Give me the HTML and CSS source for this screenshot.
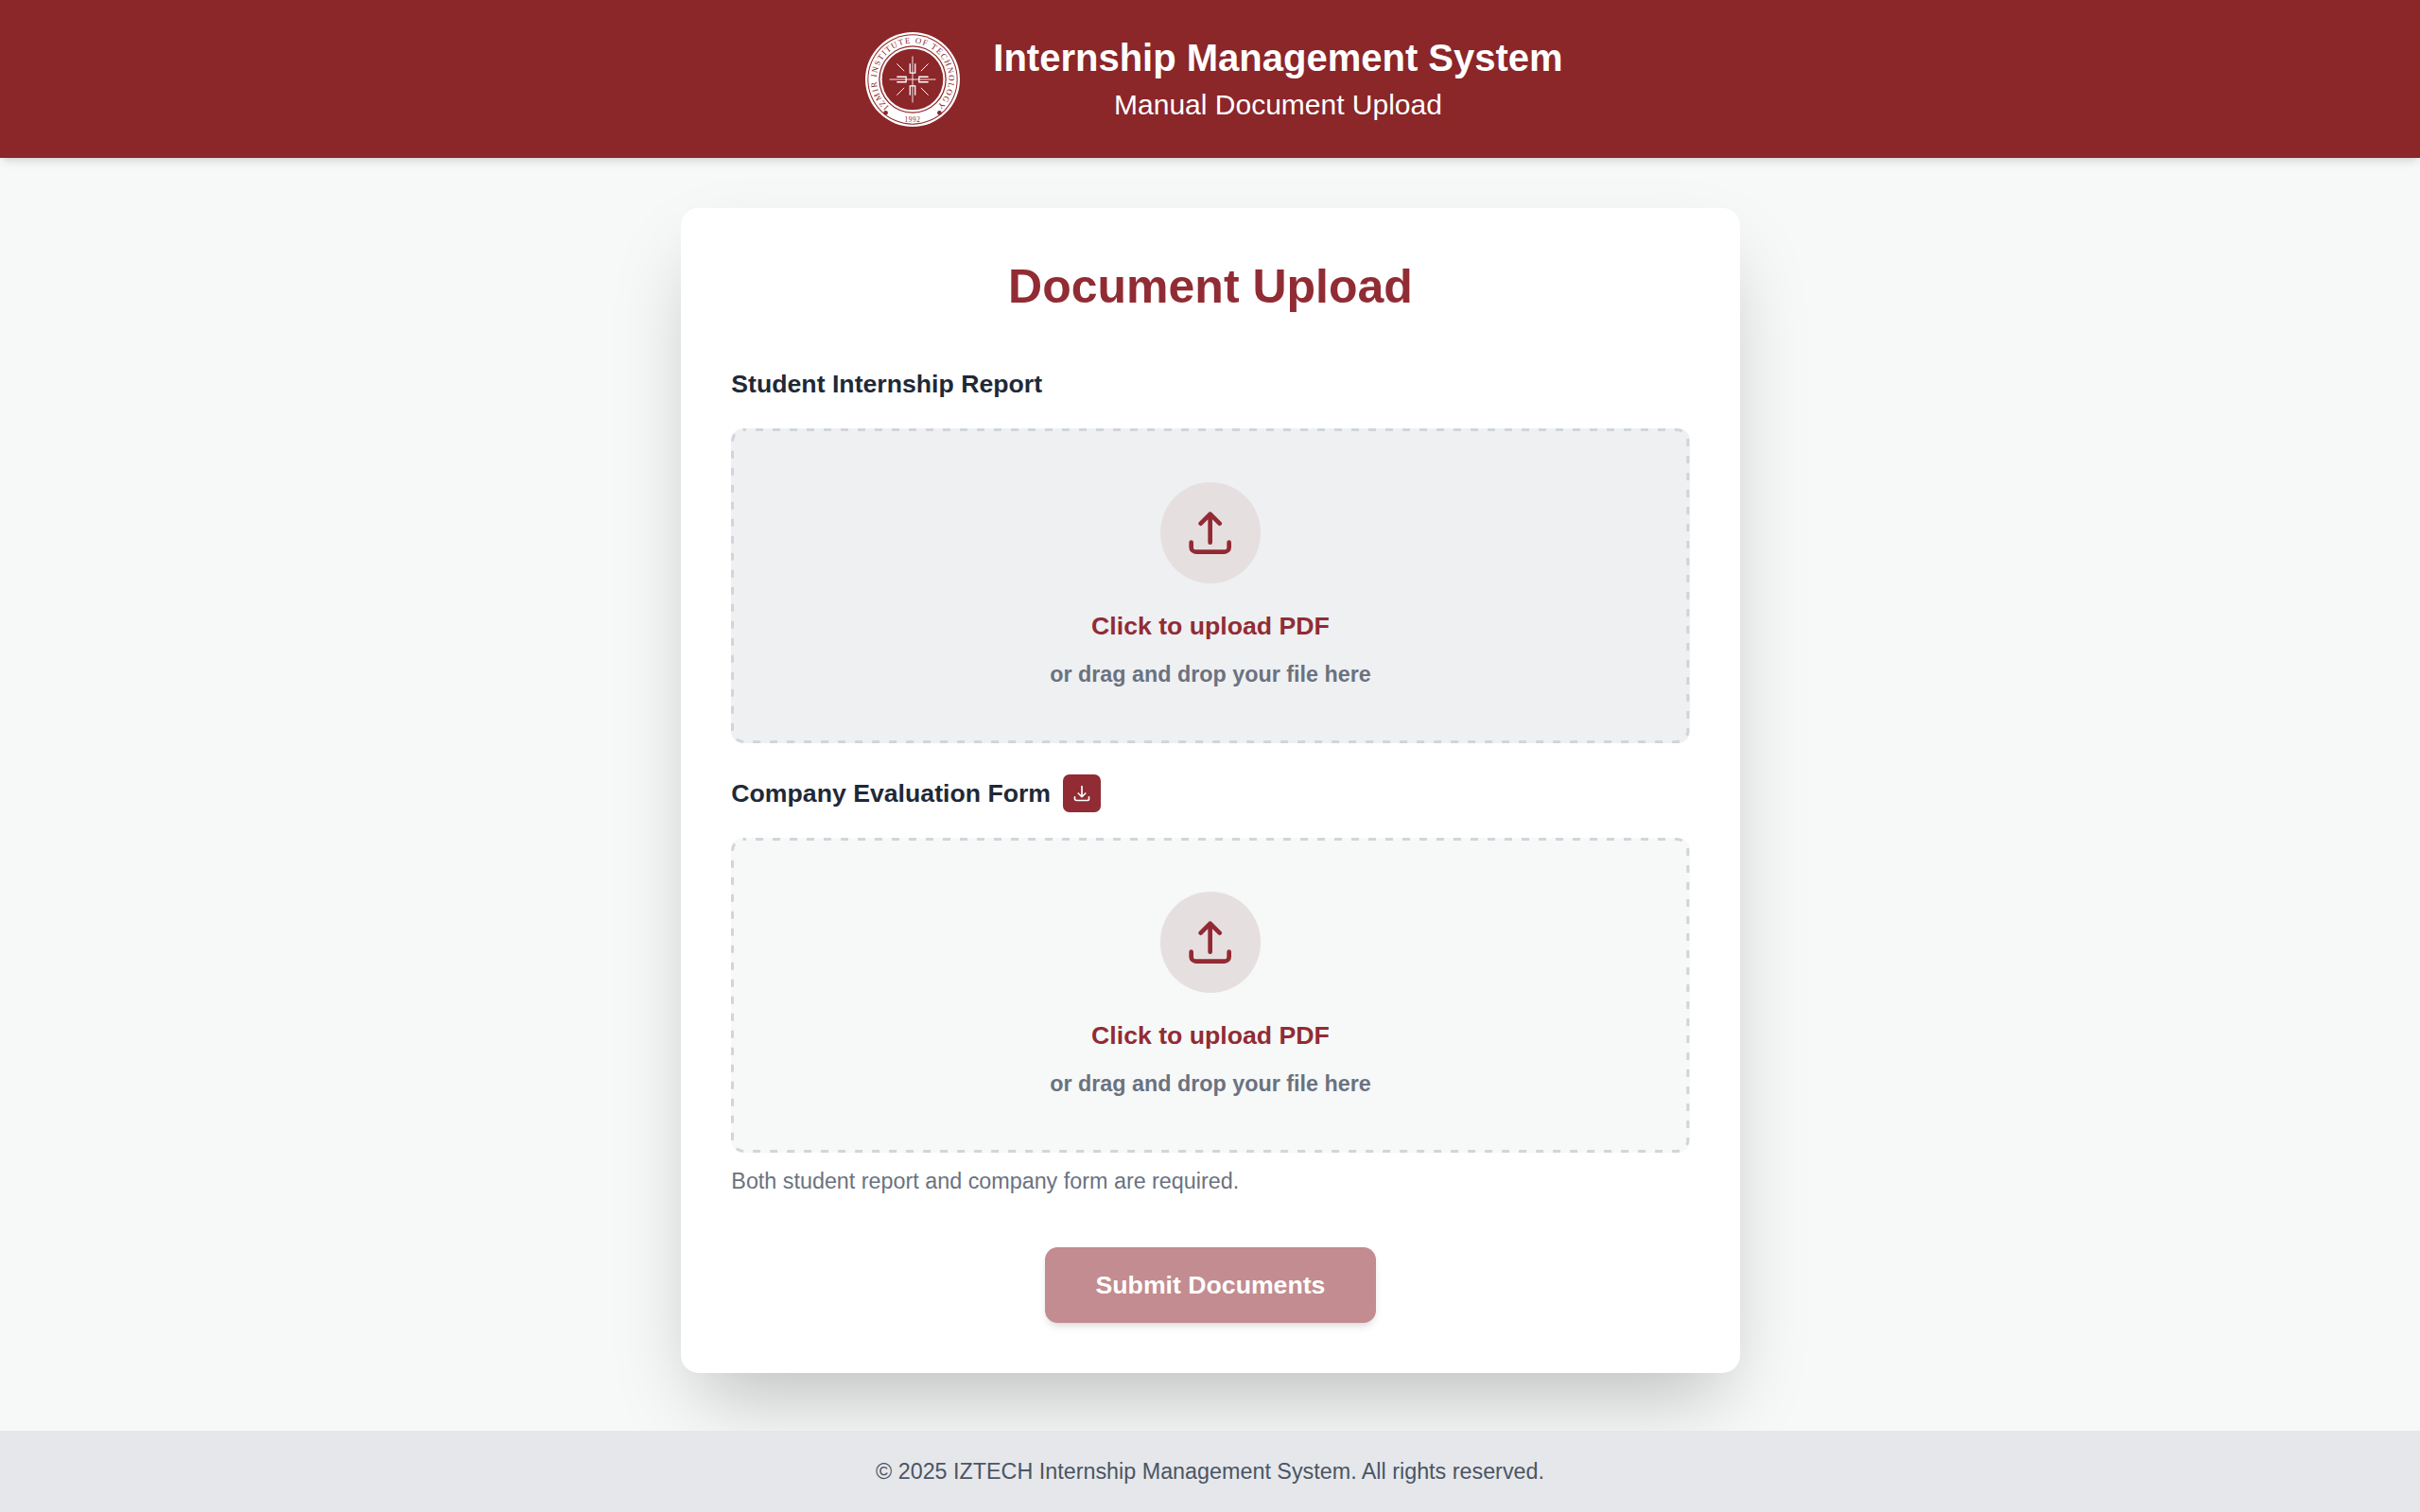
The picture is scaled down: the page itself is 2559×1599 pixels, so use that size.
FILE: index.html
```html
<!DOCTYPE html>
<html lang="en">
<head>
<meta charset="utf-8">
<title>Manual Document Upload</title>
<link rel="stylesheet" href="styles.css">
</head>
<body>
<header class="site-header">
  <svg class="logo" viewBox="0 0 102 102" aria-label="IZTECH logo">
    <defs>
      <path id="seal-arc" d="M 25 80 A 39 39 0 1 1 77 80"/>
    </defs>
    <circle cx="51" cy="51" r="51" fill="#fff"/>
    <circle cx="51" cy="51" r="48.6" fill="#8b2629"/>
    <circle cx="51" cy="51" r="47.6" fill="#fff"/>
    <circle cx="51" cy="51" r="36.500" fill="#8b2629"/>
    <circle cx="51" cy="51" r="35.200" fill="#fff"/>
    <circle cx="51" cy="51" r="33" fill="#8b2629"/>
    <text class="seal-text"><textPath href="#seal-arc" startOffset="50%" text-anchor="middle">IZMIR INSTITUTE OF TECHNOLOGY</textPath></text>
    <text class="seal-year" x="51" y="97" text-anchor="middle">1992</text>
    <circle cx="22" cy="87" r="2.4" fill="#8b2629"/>
    <circle cx="80" cy="87" r="2.4" fill="#8b2629"/>
    <g stroke="#fff" fill="none">
      <path stroke-width=".9" d="M51 26V76M26 51H76"/>
      <path stroke-width="1" d="M34 34 42 42M68 34 60 42M34 68 42 60M68 68 60 60"/>
      <path stroke-width="1.3" d="M48.200 34V44H53.800V34M48.200 68V58H53.800V68M34 48.200H44V53.800H34M68 48.200H58V53.800H68"/>
    </g>
  </svg>
  <div class="titles">
    <h1>Internship Management System</h1>
    <p>Manual Document Upload</p>
  </div>
</header>

<main class="content">
  <section class="card">
    <h2>Document Upload</h2>

    <div class="field-label"><span>Student Internship Report</span></div>
    <div class="dropzone dropzone-active">
      <svg class="dash" aria-hidden="true"><rect class="dash-rect" x="1.5" y="1.5" rx="12" ry="12"/></svg>
      <div class="icon-circle">
        <svg viewBox="0 0 24 24" class="upload-icon"><path d="M3 16.5v2.25A2.25 2.25 0 0 0 5.25 21h13.5A2.25 2.25 0 0 0 21 18.75V16.5m-13.5-9L12 3m0 0 4.5 4.5M12 3v13.5"/></svg>
      </div>
      <div class="drop-title">Click to upload PDF</div>
      <div class="drop-sub">or drag and drop your file here</div>
    </div>

    <div class="field-label second"><span>Company Evaluation Form</span>
      <button class="dl-btn" type="button" aria-label="Download">
        <svg viewBox="0 0 24 24" class="dl-icon"><path d="M3 16.5v2.25A2.25 2.25 0 0 0 5.25 21h13.5A2.25 2.25 0 0 0 21 18.75V16.5M16.5 12 12 16.5m0 0L7.5 12m4.5 4.5V3"/></svg>
      </button>
    </div>
    <div class="dropzone">
      <svg class="dash" aria-hidden="true"><rect class="dash-rect" x="1.5" y="1.5" rx="12" ry="12"/></svg>
      <div class="icon-circle">
        <svg viewBox="0 0 24 24" class="upload-icon"><path d="M3 16.5v2.25A2.25 2.25 0 0 0 5.25 21h13.5A2.25 2.25 0 0 0 21 18.75V16.5m-13.5-9L12 3m0 0 4.5 4.5M12 3v13.5"/></svg>
      </div>
      <div class="drop-title">Click to upload PDF</div>
      <div class="drop-sub">or drag and drop your file here</div>
    </div>

    <p class="hint">Both student report and company form are required.</p>
    <div class="actions"><button class="submit" type="button">Submit Documents</button></div>
  </section>
</main>

<footer class="site-footer">© 2025 IZTECH Internship Management System. All rights reserved.</footer>
</body>
</html>
```

FILE: styles.css
```css
* { box-sizing: border-box; }
html, body { margin: 0; padding: 0; }
body {
  min-height: 1599px;
  display: flex;
  flex-direction: column;
  background: #f7f9f9;
  font-family: "Liberation Sans", Arial, sans-serif;
  color: #1f2937;
}
.site-header {
  height: 167px;
  background: #8b2629;
  display: flex;
  align-items: center;
  justify-content: center;
  gap: 35px;
  color: #fff;
  box-shadow: 0 6px 10px -2px rgba(0,0,0,.1), 0 3px 6px -3px rgba(0,0,0,.1);
  position: relative;
  padding-left: 9px;
}
.logo { width: 100px; height: 100px; flex: none; }
.seal-text { font: 9px "Liberation Serif", serif; letter-spacing: 1.3px; fill: #8b2629; }
.seal-year { font: 7.5px "Liberation Serif", serif; letter-spacing: .6px; fill: #8b2629; }
.titles { text-align: center; }
.titles h1 { margin: 0; font-size: 40px; line-height: 54px; font-weight: 700; }
.titles p { margin: 1px 0 0; font-size: 30px; line-height: 44px; }
.content { flex: 1; display: flex; justify-content: center; padding-top: 53px; padding-left: 1px; }
.card {
  width: 1120px;
  align-self: flex-start;
  background: #fff;
  border-radius: 19px;
  padding: 53.33px 53.33px 52.5px;
  box-shadow: 0 40px 80px -20px rgba(0,0,0,.25);
}
.card h2 {
  margin: 0 0 53.33px;
  text-align: center;
  color: #912c34;
  font-size: 50px;
  line-height: 60px;
  font-weight: 700;
}
.field-label {
  display: flex;
  align-items: center;
  gap: 13.33px;
  height: 40px;
  margin-bottom: 26.67px;
  font-size: 26.67px;
  font-weight: 700;
  color: #1f2937;
}
.field-label.second { margin-top: 33px; margin-bottom: 27px; }
.dropzone {
  position: relative;
  height: 333px;
  border-radius: 13px;
  background: #f7f8f8;
  display: flex;
  flex-direction: column;
  align-items: center;
  padding-top: 57px;
}
.dropzone-active { background: #eff0f2; }
.dash { position: absolute; inset: 0; width: 100%; height: 100%; pointer-events: none; }
.dash-rect {
  width: calc(100% - 3px);
  height: calc(100% - 3px);
  fill: none;
  stroke: #d1d5db;
  stroke-width: 3;
  stroke-dasharray: 8 10;
  stroke-dashoffset: 5.5;
}
.icon-circle {
  width: 106.67px;
  height: 106.67px;
  border-radius: 50%;
  background: #e6dfe0;
  display: flex;
  align-items: center;
  justify-content: center;
  flex: none;
}
.upload-icon { width: 53.33px; height: 53.33px; fill: none; stroke: #932a33; stroke-width: 2.1; stroke-linecap: round; stroke-linejoin: round; }
.drop-title { margin-top: 25.5px; font-size: 26.67px; line-height: 40px; font-weight: 700; color: #912c34; }
.drop-sub { margin-top: 15px; font-size: 23.33px; line-height: 33.33px; font-weight: 700; color: #6b7280; }
.dl-btn {
  width: 40px;
  height: 40px;
  padding: 0;
  border: 0;
  border-radius: 6.67px;
  background: #912c34;
  display: flex;
  align-items: center;
  justify-content: center;
}
.dl-icon { width: 20px; height: 20px; fill: none; stroke: #fff; stroke-width: 2; stroke-linecap: round; stroke-linejoin: round; }
.hint { margin: 13.33px 0 0; font-size: 23.33px; line-height: 33.33px; color: #6b7280; }
.actions { display: flex; justify-content: center; margin-top: 53.33px; }
.submit {
  width: 350px;
  height: 80px;
  border: 0;
  border-radius: 13.33px;
  background: #c28c90;
  color: #fff;
  font: 700 26.67px "Liberation Sans", Arial, sans-serif;
  box-shadow: 0 6px 10px -2px rgba(0,0,0,.1), 0 3px 6px -3px rgba(0,0,0,.1);
}
.site-footer {
  height: 86px;
  background: #e5e7eb;
  color: #4b5563;
  display: flex;
  align-items: center;
  justify-content: center;
  font-size: 23.33px;
}
```
